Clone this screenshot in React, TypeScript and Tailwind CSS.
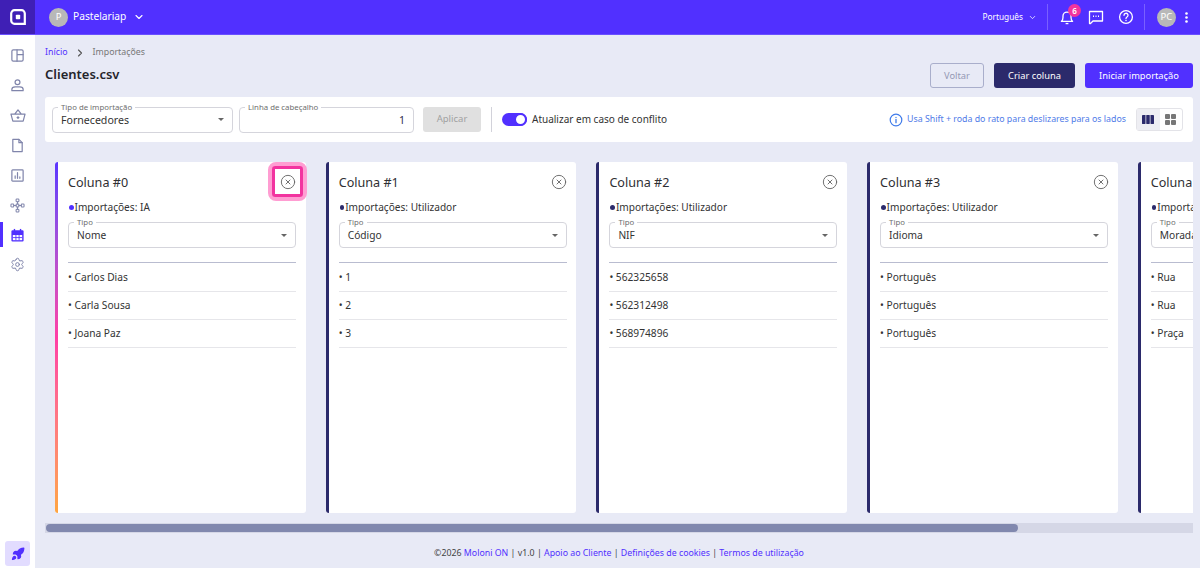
import React from "react";
import { ChevronDown, ChevronRight, CircleX, Rocket, Settings } from "lucide-react";

const font = { fontFamily: '"Noto Sans", sans-serif' };

function Caret() {
  return <span className="w-0 h-0 border-l-[3px] border-r-[3px] border-t-[3.5px] border-l-transparent border-r-transparent border-t-[#666]" />;
}

function Field({ label, value, className, right, big }: { label: string; value: string; className: string; right?: boolean; big?: boolean }) {
  const size = big ? "text-[10.6px] pt-[2px]" : "text-[10.2px] pt-[1px]";
  return (
    <div className={`relative border border-[#d5d5dc] rounded-[4px] bg-white flex items-center ${className}`}>
      <span className="absolute -top-[6px] left-[5px] bg-white px-[3px] text-[7.8px] leading-[10px] text-[#6e6e6e]">{label}</span>
      {right ? (
        <span className={`ml-auto pr-[8px] ${size} text-[#303050]`}>{value}</span>
      ) : (
        <>
          <span className={`pl-[8px] ${size} text-[#333]`}>{value}</span>
          <span className="ml-auto mr-[8px] flex"><Caret /></span>
        </>
      )}
    </div>
  );
}

const cols = [
  { n: 0, src: "IA", type: "Nome", rows: ["Carlos Dias", "Carla Sousa", "Joana Paz"] },
  { n: 1, src: "Utilizador", type: "Código", rows: ["1", "2", "3"] },
  { n: 2, src: "Utilizador", type: "NIF", rows: ["562325658", "562312498", "568974896"] },
  { n: 3, src: "Utilizador", type: "Idioma", rows: ["Português", "Português", "Português"] },
  { n: 4, src: "Utilizador", type: "Morada", rows: ["Rua", "Rua", "Praça"] },
];

function Card({ c }: { c: (typeof cols)[number] }) {
  const first = c.n === 0;
  return (
    <div className="relative w-[250.7px] h-[351px] shrink-0 bg-white rounded-[3px] pl-[13px] pr-[10px]">
      <span className={`absolute left-0 top-0 bottom-0 w-[3px] rounded-l-[3px] ${first ? "bg-gradient-to-b from-[#5a34ff] via-[#ff3ea5] to-[#ffa53e]" : "bg-[#2b2a6b]"}`} />
      <div className="flex items-center justify-between h-[40px] pt-[3px]">
        <span className="text-[12.6px] text-[#2f2f33]">Coluna #{c.n}</span>
        {first ? (
          <span className="w-[16px] h-[16px]" />
        ) : (
          <CircleX size={16} strokeWidth={1.4} color="#666" className="-mr-[1px] -mt-[3px]" />
        )}
      </div>
      <div className="flex items-center text-[10.1px] text-[#333] h-[17px] mt-[-3px]">
        <span className={`w-[4.5px] h-[4.5px] rounded-full ml-[1px] mr-[1px] ${first ? "bg-[#5130ff]" : "bg-[#2b2a6b]"}`} />
        Importações: {c.src}
      </div>
      <Field label="Tipo" value={c.type} className="h-[26px] mt-[6px] w-[228px]" />
      <div className="mt-[14px] mb-[1px] w-[228px] border-t border-[#b9bcd0]" />
      {c.rows.map((r, i) => (
        <div key={i} className="w-[228px] h-[28px] border-b border-[#e6e6ea] flex items-center text-[10.2px] text-[#333]">• {r}</div>
      ))}
    </div>
  );
}

const S = { fill: "none", stroke: "#8085ab", strokeWidth: 1.3, strokeLinejoin: "round" as const, strokeLinecap: "round" as const };

const navIcons = [
  <svg key="a" width="15" height="15" viewBox="0 0 16 16" {...S}><rect x="2" y="2" width="12" height="12" rx="1.5" /><path d="M7.5 2v12M7.5 7H14" /></svg>,
  <svg key="b" width="15" height="15" viewBox="0 0 16 16" {...S}><circle cx="8" cy="4.5" r="2.6" /><path d="M5.5 9.5h5c2 0 3.5 1 3.5 2.5v1.5H2V12c0-1.500 1.500-2.500 3.500-2.500z" /></svg>,
  <svg key="c" width="16" height="15" viewBox="0 0 17 16" {...S}><path d="M5 6.500 8.500 2 12 6.500M1 6.500h15l-2 7.500H3z" /><path d="M7.500 10.200h2M8.500 9.200v2" /></svg>,
  <svg key="d" width="15" height="15" viewBox="0 0 16 16" {...S}><path d="M3 1.500h6.500L13 5v9.500H3z" /><path d="M9.500 1.500V5H13" /></svg>,
  <svg key="e" width="15" height="15" viewBox="0 0 16 16" {...S}><rect x="2" y="2" width="12" height="12" rx="0.8" /><path d="M5.500 11V8.500M8 11V5M10.500 11V9.500" /></svg>,
  <svg key="f" width="15" height="15" viewBox="0 0 16 16" {...S} strokeWidth={1.1}><rect x="6.500" y="1" width="3" height="3" rx="0.8" /><rect x="6.500" y="6.500" width="3" height="3" rx="0.8" /><rect x="1" y="6.500" width="3" height="3" rx="0.8" /><rect x="12" y="6.500" width="3" height="3" rx="0.8" /><rect x="6.500" y="12" width="3" height="3" rx="0.8" /><path d="M8 4v2.500M8 9.500V12M4 8h2.500M9.500 8H12" /></svg>,
  <svg key="g" width="15" height="15" viewBox="0 0 16 16"><rect x="1.500" y="2.500" width="13" height="12" rx="1.200" fill="#5130ff" /><rect x="4" y="1" width="1.500" height="3" fill="#5130ff" /><rect x="10.500" y="1" width="1.500" height="3" fill="#5130ff" /><rect x="3" y="7.500" width="10" height="5.500" fill="#fff" /><path d="M6.300 7.500v5.500M9.700 7.500v5.500M3 10.200h10" stroke="#5130ff" strokeWidth="0.9" /></svg>,
  <Settings key="h" size={15} strokeWidth={1.6} color="#8085ab" />,
];

export default function App() {
  return (
    <div className="w-[1200px] h-[568px] overflow-hidden flex flex-col bg-[#e8eaf6]" style={font}>
      <header className="h-[35px] shrink-0 bg-[#5130ff] flex items-center border-b border-[#6a50ff] text-white">
        <div className="w-[35px] h-full bg-[#3f1fb5] flex items-center justify-center">
          <svg width="16" height="16" viewBox="0 0 16 16" fill="none">
            <path d="M4.500 1.200h7a3.300 3.300 0 0 1 3.300 3.300v10.300H4.500a3.300 3.300 0 0 1-3.300-3.300v-7a3.300 3.300 0 0 1 3.300-3.300z" stroke="#fff" strokeWidth="2.200" />
            <rect x="5.800" y="5.800" width="4.400" height="4.400" rx="0.800" fill="#fff" />
          </svg>
        </div>
        <span className="ml-[14px] w-[19px] h-[19px] rounded-full bg-[#b8b8b8] text-[9.500px] flex items-center justify-center">P</span>
        <span className="ml-[5px] text-[10.200px]">Pastelariap</span>
        <ChevronDown size={12} strokeWidth={2.200} className="ml-[7px]" />
        <span className="ml-auto text-[8.300px]">Português</span>
        <ChevronDown size={9} className="ml-[5px]" />
        <span className="ml-[10px] w-px h-[26px] bg-[#7a60ff]" />
        <span className="relative ml-[12px] flex">
          <svg width="14" height="15" viewBox="0 0 15 16" fill="none" stroke="#fff" strokeWidth="1.400" strokeLinejoin="round"><path d="M1.500 12.200c1.200-1 1.700-2.200 1.700-4.200V6.500a4.300 4.300 0 0 1 8.600 0V8c0 2 .5 3.200 1.700 4.200z" /><path d="M6 14.500h3" /></svg>
          <span className="absolute -top-[6px] left-[8px] w-[13px] h-[13px] rounded-full bg-[#f2339f] text-[8px] font-semibold leading-[13px] text-center">6</span>
        </span>
        <svg className="ml-[14px]" width="16" height="16" viewBox="0 0 16 16" fill="none" stroke="#fff" strokeWidth="1.300" strokeLinejoin="round"><path d="M1.500 2.500h13v9.500H5L2.500 14.500h-1z" /><path d="M5 7.200h1M7.500 7.200h1M10 7.200h1" strokeWidth="1.400" /></svg>
        <svg className="ml-[14px]" width="16" height="16" viewBox="0 0 16 16" fill="none" stroke="#fff" strokeWidth="1.300" strokeLinecap="round"><circle cx="8" cy="8" r="6.400" /><path d="M6 6.300a2 2 0 1 1 3 1.700c-.7.400-1 .8-1 1.500" /><path d="M8 11.500v.1" strokeWidth="1.500" /></svg>
        <span className="ml-[10px] w-px h-[26px] bg-[#7a60ff]" />
        <span className="ml-[12px] w-[19px] h-[19px] rounded-full bg-[#b8b8b8] text-[9.500px] flex items-center justify-center">PC</span>
        <svg className="ml-[9px] mr-[12px]" width="3" height="11" viewBox="0 0 3 11" fill="#fff"><circle cx="1.500" cy="1.500" r="1.300" /><circle cx="1.500" cy="5.500" r="1.300" /><circle cx="1.500" cy="9.500" r="1.300" /></svg>
      </header>
      <div className="flex-1 flex min-h-0">
        <aside className="w-[35px] shrink-0 bg-white flex flex-col items-center relative pt-[5.8px]">
          {navIcons.map((icon, i) => (
            <span key={i} className="h-[29.900px] w-full flex items-center justify-center relative">
              {i === 6 && <span className="absolute left-0 top-[2px] w-[2.500px] h-[25px] bg-[#5130ff]" />}
              {icon}
            </span>
          ))}
          <span className="absolute bottom-[2px] left-[5px] w-[25px] h-[25px] rounded-[3px] bg-[#e2dcff] flex items-center justify-center">
            <Rocket size={14} color="#5130ff" fill="#5130ff" />
          </span>
        </aside>
        <main className="flex-1 min-w-0 pl-[10px] pr-[7px] flex flex-col">
          <div className="flex items-center h-[12px] mt-[12px] text-[8.800px]">
            <span className="text-[#5130ff]">Início</span>
            <ChevronRight size={12} strokeWidth={2.200} className="ml-[6px] mr-[7px] text-[#555]" />
            <span className="text-[#777]">Importações</span>
          </div>
          <div className="flex items-start justify-between mt-[4px] h-[39px]">
            <h1 className="text-[13px] font-semibold text-[#25252b] mt-[2px]">Clientes.csv</h1>
            <div className="flex gap-[10px] text-[9.300px]">
              <span className="w-[54px] h-[25px] rounded-[3px] border border-[#a9aecb] text-[#9498b4] flex items-center justify-center">Voltar</span>
              <span className="w-[81px] h-[25px] rounded-[3px] bg-[#2b2a6b] text-white flex items-center justify-center">Criar coluna</span>
              <span className="w-[108px] h-[25px] rounded-[3px] bg-[#5130ff] text-white flex items-center justify-center">Iniciar importação</span>
            </div>
          </div>
          <div className="h-[45px] shrink-0 bg-white rounded-[3px] flex items-center pl-[7px] pr-[10px] -mt-[5px]">
            <Field label="Tipo de importação" value="Fornecedores" big className="w-[181px] h-[26px]" />
            <Field label="Linha de cabeçalho" value="1" right big className="w-[175px] h-[26px] ml-[6px]" />
            <span className="ml-[9px] w-[58px] h-[25px] rounded-[3px] bg-[#e0e0e0] text-[#a0a0a0] text-[9.500px] flex items-center justify-center">Aplicar</span>
            <span className="ml-[10px] w-px h-[25px] bg-[#d2d2da]" />
            <span className="ml-[10px] w-[25px] h-[13px] rounded-full bg-[#5130ff] relative">
              <span className="absolute right-0 top-0 w-[13px] h-[13px] rounded-full bg-white border-2 border-[#5130ff]" />
            </span>
            <span className="ml-[5px] text-[10px] text-[#333]">Atualizar em caso de conflito</span>
            <svg className="ml-auto" width="14" height="14" viewBox="0 0 14 14" fill="none" stroke="#3f7bea" strokeWidth="1.200" strokeLinecap="round"><circle cx="7" cy="7" r="5.800" /><path d="M7 6.300v3.400M7 4.300v.1" strokeWidth="1.300" /></svg>
            <span className="ml-[4px] text-[8.800px] text-[#4f7be8]">Usa Shift + roda do rato para deslizares para os lados</span>
            <div className="ml-[10px] flex h-[23px] border border-[#e3e3e8] rounded-[3px]">
              <span className="w-[22.500px] bg-[#eeeef3] flex items-center justify-center">
                <svg width="12" height="9" viewBox="0 0 12 9" fill="#2b2a6b"><rect x="0" y="0" width="3.500" height="9" rx="0.400" /><rect x="4.250" y="0" width="3.500" height="9" rx="0.400" /><rect x="8.500" y="0" width="3.500" height="9" rx="0.400" /></svg>
              </span>
              <span className="w-[22.500px] flex items-center justify-center">
                <svg width="11" height="11" viewBox="0 0 11 11" fill="#777"><rect x="0" y="0" width="5" height="5" rx="1" /><rect x="6" y="0" width="5" height="5" rx="1" /><rect x="0" y="6" width="5" height="5" rx="1" /><rect x="6" y="6" width="5" height="5" rx="1" /></svg>
              </span>
            </div>
          </div>
          <div className="relative mt-[20px] h-[351px] shrink-0">
            <div className="flex gap-[20px] overflow-hidden pl-[10px] h-full">
              {cols.map((c) => <Card key={c.n} c={c} />)}
            </div>
            <span className="absolute left-[223px] top-0 w-[39px] h-[39px] flex items-center justify-center rounded-[8px] border-[4px] border-[#ff9dd2]">
              <span className="w-[31px] h-[31px] rounded-[3px] border-[3.5px] border-[#f2339f] flex items-center justify-center bg-white">
                <CircleX size={16} strokeWidth={1.4} color="#666" />
              </span>
            </span>
          </div>
          <div className="mt-[10px] h-[10px] shrink-0 bg-[#d5d7e6] flex items-center">
            <span className="ml-[1px] w-[972px] h-[8px] rounded-full bg-[#8188ae]" />
          </div>
          <div className="flex-1 flex items-center justify-center text-[8.800px] text-[#444] pt-[6px]">
            <span>©2026 <span className="text-[#5130ff]">Moloni ON</span> | v1.0 | <span className="text-[#5130ff]">Apoio ao Cliente</span> | <span className="text-[#5130ff]">Definições de cookies</span> | <span className="text-[#5130ff]">Termos de utilização</span></span>
          </div>
        </main>
      </div>
    </div>
  );
}
